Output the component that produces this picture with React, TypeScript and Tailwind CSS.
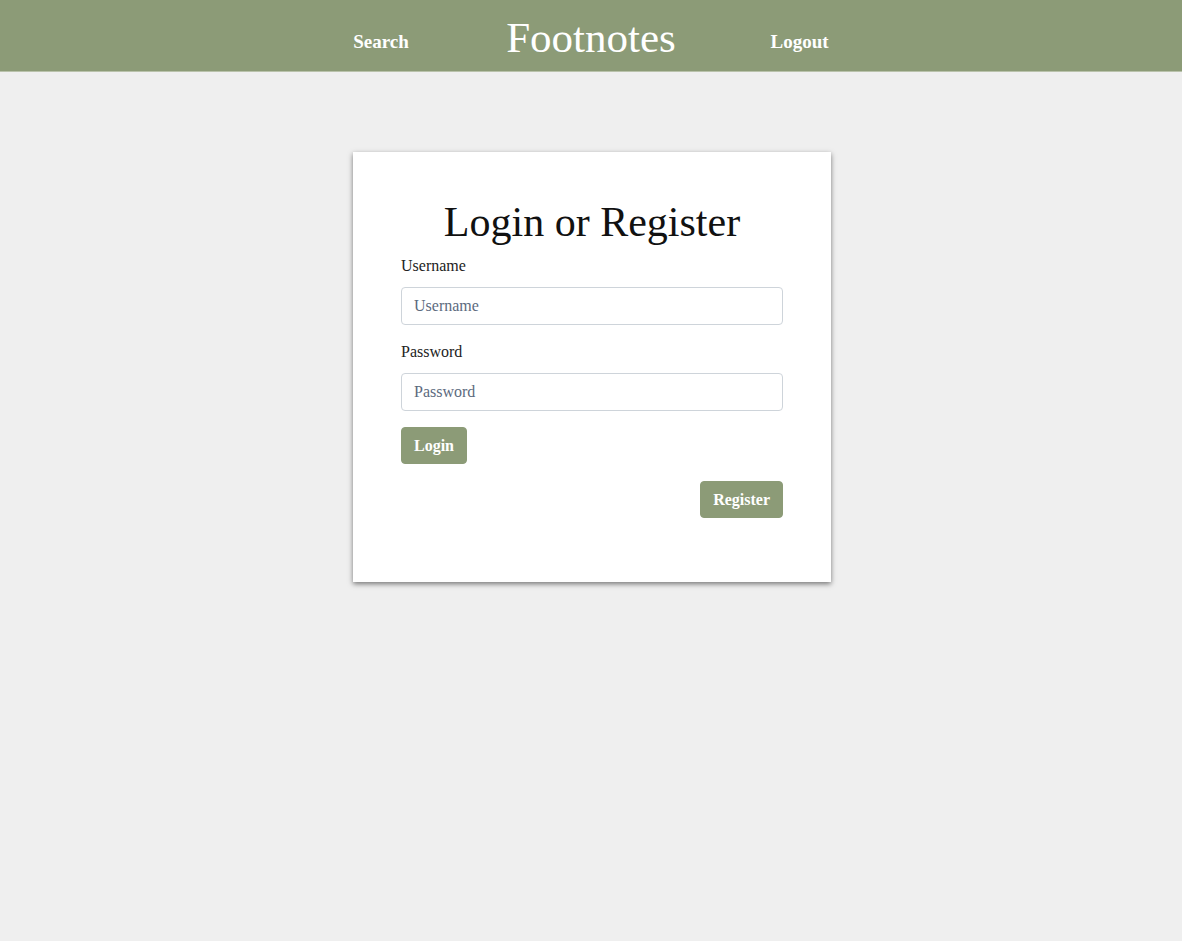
export default function App() {
  const serif = { fontFamily: '"Liberation Serif", "DejaVu Serif", serif' };
  return (
    <div className="min-h-[941px] bg-[#efefef]" style={serif}>
      <header className="h-[72px] bg-[#8c9b77] border-b border-[#b9c2ab] grid grid-cols-[210px_210px_210px] justify-center text-white">
        <a className="mt-[32px] text-center text-[19px] font-bold leading-none">Search</a>
        <a className="mt-[16px] text-center text-[43px] leading-none">Footnotes</a>
        <a className="mt-[32px] pr-[3px] text-center text-[19px] font-bold leading-none">Logout</a>
      </header>
      <main className="pt-[80px] pl-[2px]">
        <div className="mx-auto w-[478px] bg-white pt-[45px] px-[48px] pb-[64px] shadow-[0_2px_5px_rgba(0,0,0,0.5)]">
          <h1 className="text-center text-[42px] leading-[50px] text-[#111]">Login or Register</h1>
          <label className="block mt-[7px] text-[16px] leading-[24px] text-[#222]">Username</label>
          <input
            className="mt-[9px] block w-full h-[38px] rounded-[4px] border border-[#ced4da] px-[12px] text-[16px] placeholder:text-[#5c6a7e] outline-none"
            placeholder="Username"
            style={serif}
          />
          <label className="block mt-[15px] text-[16px] leading-[24px] text-[#222]">Password</label>
          <input
            type="password"
            className="mt-[9px] block w-full h-[38px] rounded-[4px] border border-[#ced4da] px-[12px] text-[16px] placeholder:text-[#5c6a7e] outline-none"
            placeholder="Password"
            style={serif}
          />
          <button
            className="mt-[16px] block h-[37px] rounded-[4px] border border-[#8c9b77] bg-[#8c9b77] px-3 text-[16px] font-bold text-white"
            style={serif}
          >
            Login
          </button>
          <div className="mt-[17px] flex justify-end">
            <button
              className="h-[37px] rounded-[4px] border border-[#8c9b77] bg-[#8c9b77] px-3 text-[16px] font-bold text-white"
              style={serif}
            >
              Register
            </button>
          </div>
        </div>
      </main>
    </div>
  );
}
